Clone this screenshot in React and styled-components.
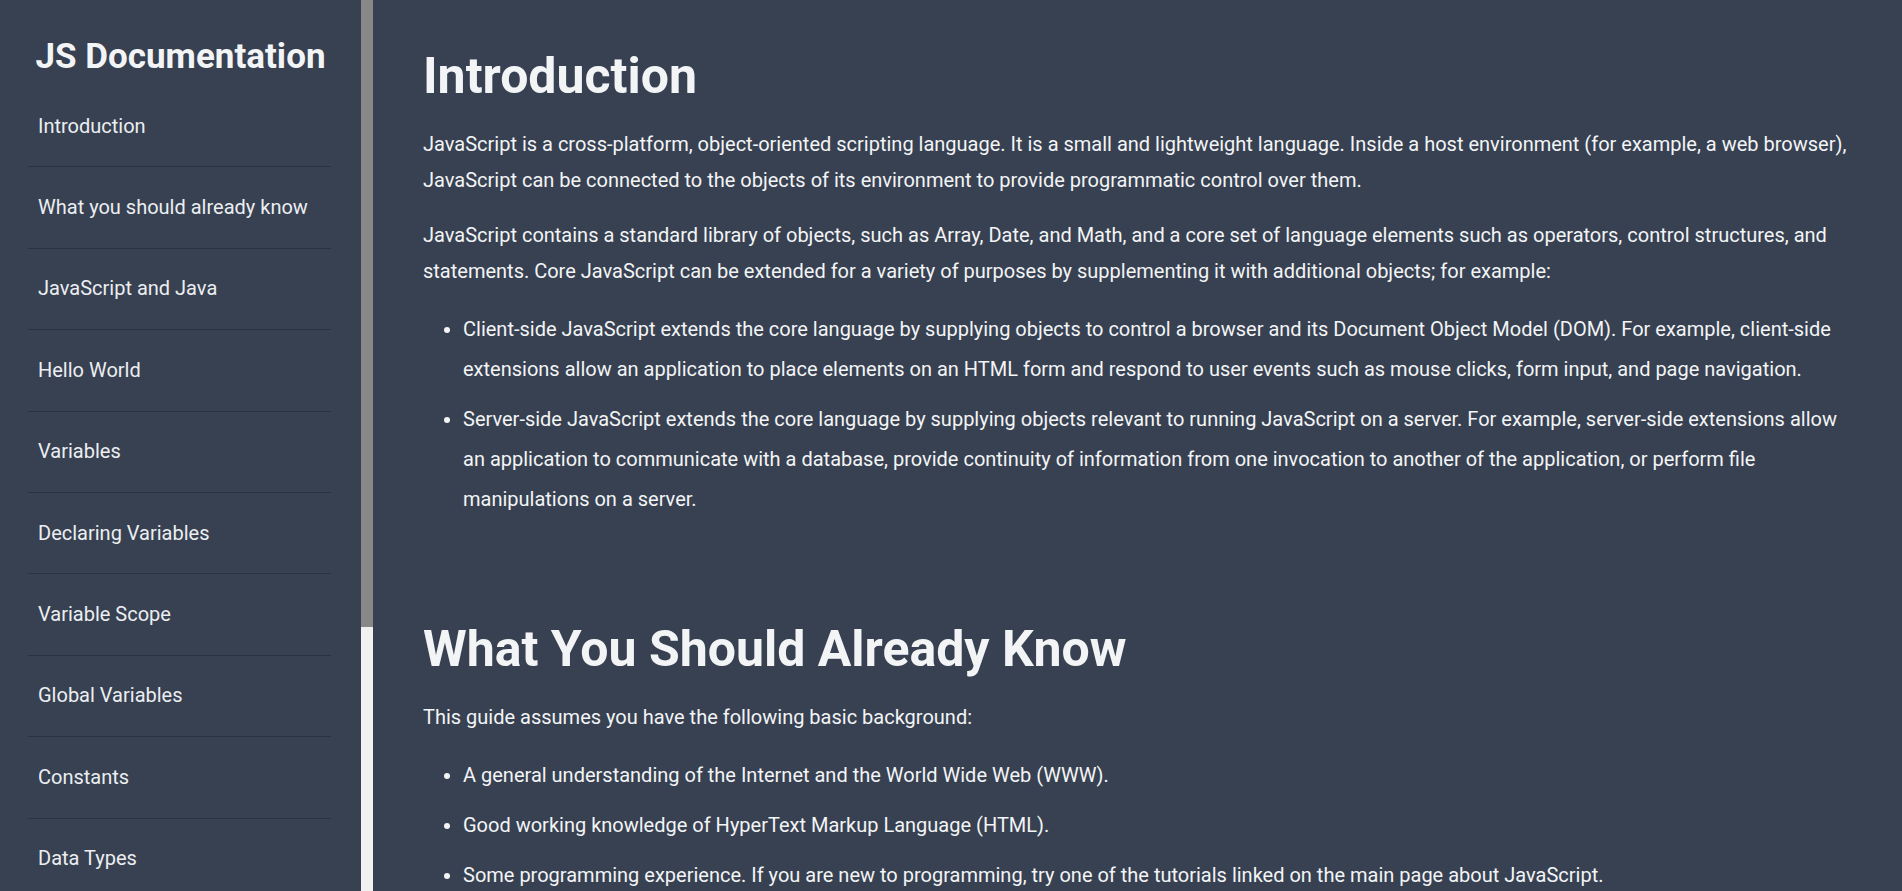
import React from "react";
import styled, { createGlobalStyle } from "styled-components";

const GlobalStyle = createGlobalStyle`
  html, body {
    margin: 0;
    padding: 0;
    height: 100%;
    overflow: hidden;
  }
  body {
    font-family: Roboto, "Liberation Sans", sans-serif;
    background: #374151;
    color: #f3f4f6;
  }
`;

const Layout = styled.div`
  display: flex;
  height: 100vh;
`;

const Sidebar = styled.nav`
  display: flex;
  width: 373px;
  flex-shrink: 0;
  height: 100%;
`;

const SidebarContent = styled.div`
  width: 361px;
  height: 100%;
  overflow: hidden;
`;

// headless screenshots hide native scrollbars, so the track is drawn
const ScrollTrack = styled.div`
  width: 12px;
  height: 100%;
  background: #f1f1f1;
`;

const ScrollThumb = styled.div`
  width: 100%;
  height: ${(p) => p.$size}px;
  background: #888;
`;

const NavHeader = styled.header`
  padding: 36px 0 9px;
  text-align: center;
`;

const NavTitle = styled.h1`
  margin: 0;
  font-size: 35px;
  line-height: 41px;
  font-weight: 700;
  color: #f3f4f6;
`;

const NavList = styled.ul`
  list-style: none;
  margin: 0 30px 0 28px;
  padding: 0;
`;

const NavLink = styled.a`
  display: block;
  padding: 28.5px 10px;
  font-size: 20px;
  line-height: 23.4px;
  color: #eceef2;
  text-decoration: none;
  border-bottom: 1px solid #2a3242;
`;

const Main = styled.main`
  flex: 1;
  height: 100%;
  overflow: hidden;
  padding: 0 50px;
  box-sizing: border-box;
`;

const Section = styled.section`
  padding: 47px 0 54px;
`;

const Heading = styled.h2`
  margin: 0 0 21px;
  font-size: 50px;
  font-weight: 700;
  color: #f3f4f6;
`;

const Paragraph = styled.p`
  margin: 0 0 19px;
  font-size: 20px;
  line-height: 36px;
`;

const List = styled.ul`
  margin: 20px 0 0;
  padding-left: 40px;
`;

const Item = styled.li`
  font-size: 20px;
  line-height: 40px;

  & + & {
    margin-top: 10px;
  }
`;

const navItems = [
  "Introduction",
  "What you should already know",
  "JavaScript and Java",
  "Hello World",
  "Variables",
  "Declaring Variables",
  "Variable Scope",
  "Global Variables",
  "Constants",
  "Data Types",
  "if...else statement",
  "while statement",
  "Function declarations",
  "Reference",
];

export default function App() {
  return (
    <>
      <GlobalStyle />
      <Layout>
        <Sidebar id="navbar">
          <SidebarContent>
            <NavHeader>
              <NavTitle>JS Documentation</NavTitle>
            </NavHeader>
            <NavList>
              {navItems.map((item) => (
                <li key={item}>
                  <NavLink href={`#${item.replace(/ /g, "_")}`}>{item}</NavLink>
                </li>
              ))}
            </NavList>
          </SidebarContent>
          <ScrollTrack>
            <ScrollThumb $size={627} />
          </ScrollTrack>
        </Sidebar>

        <Main id="main-doc">
          <Section id="Introduction">
            <Heading>Introduction</Heading>
            <Paragraph>
              JavaScript is a cross-platform, object-oriented scripting language. It is a small and
              lightweight language. Inside a host environment (for example, a web browser), JavaScript
              can be connected to the objects of its environment to provide programmatic control over
              them.
            </Paragraph>
            <Paragraph>
              JavaScript contains a standard library of objects, such as Array, Date, and Math, and a
              core set of language elements such as operators, control structures, and statements. Core
              JavaScript can be extended for a variety of purposes by supplementing it with additional
              objects; for example:
            </Paragraph>
            <List>
              <Item>
                Client-side JavaScript extends the core language by supplying objects to control a
                browser and its Document Object Model (DOM). For example, client-side extensions allow
                an application to place elements on an HTML form and respond to user events such as
                mouse clicks, form input, and page navigation.
              </Item>
              <Item>
                Server-side JavaScript extends the core language by supplying objects relevant to
                running JavaScript on a server. For example, server-side extensions allow an
                application to communicate with a database, provide continuity of information from one
                invocation to another of the application, or perform file manipulations on a server.
              </Item>
            </List>
          </Section>

          <Section id="What_you_should_already_know">
            <Heading>What You Should Already Know</Heading>
            <Paragraph>This guide assumes you have the following basic background:</Paragraph>
            <List>
              <Item>A general understanding of the Internet and the World Wide Web (WWW).</Item>
              <Item>Good working knowledge of HyperText Markup Language (HTML).</Item>
              <Item>
                Some programming experience. If you are new to programming, try one of the tutorials
                linked on the main page about JavaScript.
              </Item>
            </List>
          </Section>
        </Main>
      </Layout>
    </>
  );
}
